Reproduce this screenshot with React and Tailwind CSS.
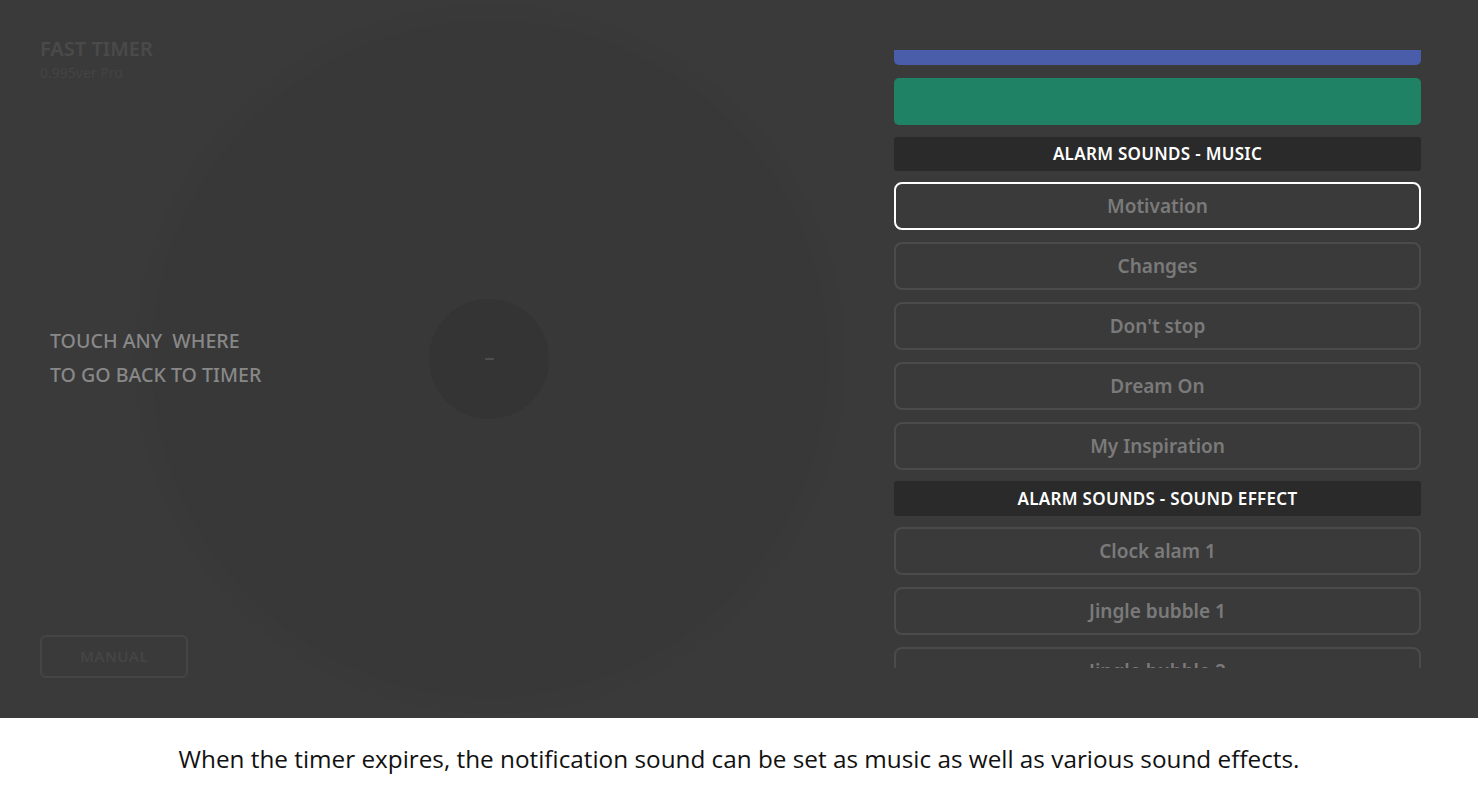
import React from "react";

const music = ["Motivation", "Changes", "Don't stop", "Dream On", "My Inspiration"];
const effects = ["Clock alam 1", "Jingle bubble 1", "Jingle bubble 2"];

function Item({ label, selected, className = "" }) {
  return (
    <div
      className={
        "flex h-[48px] shrink-0 items-center justify-center rounded-[8px] border-2 text-[19px] font-semibold text-[#7a7a7a] " +
        (selected ? "border-white " : "border-[#4b4b4b] ") +
        className
      }
    >
      {label}
    </div>
  );
}

function Header({ label, className = "" }) {
  return (
    <div
      className={
        "flex h-[34px] shrink-0 items-center justify-center rounded-[3px] bg-[#2a2a2a] text-[17px] font-semibold tracking-[0.3px] text-white " +
        className
      }
    >
      {label}
    </div>
  );
}

export default function App() {
  return (
    <div
      className="flex h-[800px] w-[1478px] flex-col overflow-hidden"
      style={{ fontFamily: '"Noto Sans", "Open Sans", sans-serif' }}
    >
      <div className="relative flex h-[718px] w-full bg-[#3a3a3a]">
        {/* big faint dial */}
        <div className="pointer-events-none absolute left-[155px] top-[24px] h-[670px] w-[670px] rounded-full bg-[#383838] shadow-[0_0_30px_rgba(0,0,0,0.05)]" />
        {/* center knob */}
        <div className="pointer-events-none absolute left-[429px] top-[299px] flex h-[120px] w-[120px] items-center justify-center rounded-full bg-[#343434]">
          <div className="h-[2px] w-[9px] rounded bg-[#4e4e4e]" />
        </div>

        {/* left column */}
        <div className="relative flex h-full w-[894px] flex-col">
          <div className="pl-[40px] pt-[38px]">
            <div className="text-[20px] font-semibold leading-[22px] text-[#4a4a4a]">FAST TIMER</div>
            <div className="mt-[4px] text-[14px] leading-[18px] text-[#444444]">0.995ver Pro</div>
          </div>
          <div className="mt-[242px] pl-[50px] text-[19.6px] font-medium leading-[34px] text-[#888888]">
            <div className="whitespace-pre">TOUCH ANY  WHERE</div>
            <div>TO GO BACK TO TIMER</div>
          </div>
          <div className="mb-[40px] ml-[40px] mt-auto flex h-[43px] w-[148px] items-center justify-center rounded-[6px] border-2 border-[#454545] text-[15px] font-semibold tracking-[0.5px] text-[#454545]">
            MANUAL
          </div>
        </div>

        {/* right column */}
        <div className="relative w-[527px] pt-[50px]">
          <div className="flex h-[618px] flex-col overflow-hidden">
            <div className="-mt-[32px] h-[47px] shrink-0 rounded-[5px] bg-[#4a5dab]" />
            <div className="mt-[13px] h-[47px] shrink-0 rounded-[5px] bg-[#208264]" />
            <Header label="ALARM SOUNDS - MUSIC" className="mt-[12px]" />
            {music.map((m, i) => (
              <Item key={m} label={m} selected={i === 0} className={i === 0 ? "mt-[11px]" : "mt-[12px]"} />
            ))}
            <Header label="ALARM SOUNDS - SOUND EFFECT" className="mt-[11px] h-[35px]" />
            {effects.map((m, i) => (
              <Item key={m} label={m} className={i === 0 ? "mt-[11px]" : "mt-[12px]"} />
            ))}
          </div>
        </div>
      </div>

      <div className="flex h-[82px] w-full items-center justify-center bg-white">
        <div className="text-[24.3px] text-[#111111]" style={{ fontFamily: '"Open Sans", "Noto Sans", sans-serif' }}>
          When the timer expires, the notification sound can be set as music as well as various sound effects.
        </div>
      </div>
    </div>
  );
}
